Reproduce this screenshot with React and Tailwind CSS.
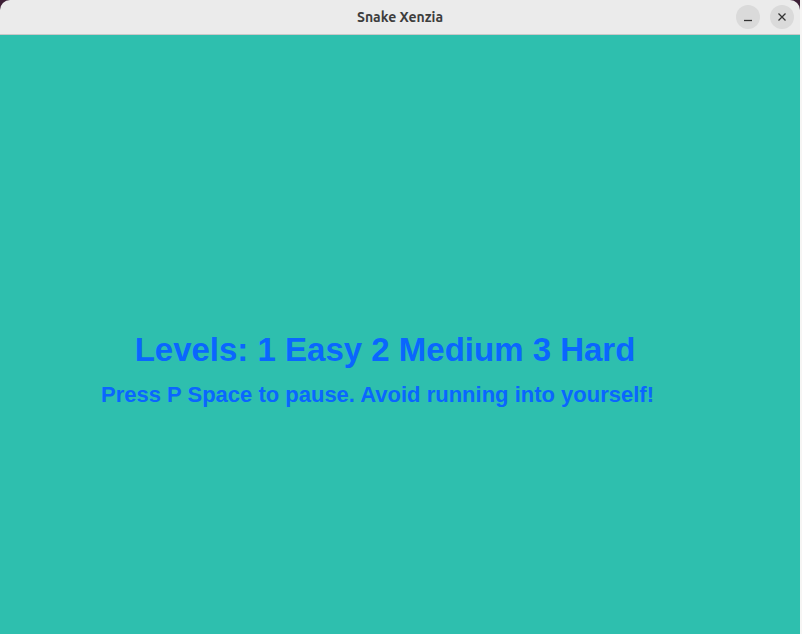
export default function App() {
  return (
    <div className="w-[802px] h-[634px] flex bg-[#f6f5f4] overflow-hidden">
      <div className="w-[800px] h-full flex flex-col bg-[#3d1f36]">
        <div className="h-[35px] flex items-center justify-center relative bg-[#ebebeb] rounded-t-[10px] border-b border-[#c8c8c8]">
          <span className="text-[14px] font-bold text-[#3d3d3d] font-['Ubuntu','Noto_Sans',sans-serif]">
            Snake Xenzia
          </span>
          <div className="absolute right-[6px] top-[5px] flex gap-[10px]">
            <button className="w-[24px] h-[24px] rounded-full bg-[#dadada] flex items-center justify-center">
              <svg width="10" height="10" viewBox="0 0 10 10">
                <path d="M1 8.5h8" stroke="#333" strokeWidth="1.3" />
              </svg>
            </button>
            <button className="w-[24px] h-[24px] rounded-full bg-[#dadada] flex items-center justify-center">
              <svg width="10" height="10" viewBox="0 0 10 10">
                <path d="M1.5 1.5l7 7M8.5 1.5l-7 7" stroke="#333" strokeWidth="1.3" />
              </svg>
            </button>
          </div>
        </div>
        <div className="flex-1 bg-[#2ebfae] flex flex-col items-center pt-[296px] font-['Liberation_Sans',Arial,sans-serif] font-bold text-[#0a66ff]">
          <div className="text-[33px] leading-[38px] ml-[-30px]">Levels: 1 Easy 2 Medium 3 Hard</div>
          <div className="text-[22px] leading-[26px] mt-[13px] ml-[-45px]">
            Press P Space to pause. Avoid running into yourself!
          </div>
        </div>
      </div>
    </div>
  );
}
